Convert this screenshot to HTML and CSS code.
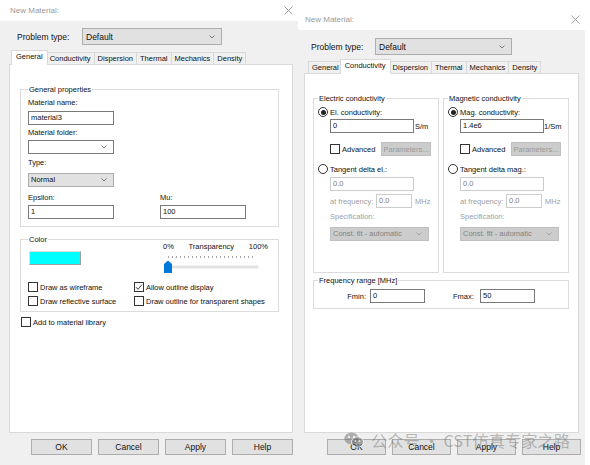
FILE: index.html
```html
<!DOCTYPE html>
<html>
<head>
<meta charset="utf-8">
<link rel="stylesheet" href="styles.css">
</head>
<body>
<div class="screen">
  <div class="dlg dlg-left">
    <div class="titlebar">
      <span class="title">New Material:</span>
      <svg class="close" viewBox="0 0 9 9"><path d="M0.5 0.5 L8.5 8.5 M8.5 0.5 L0.5 8.5" stroke="#8a8a8a" stroke-width="0.8" fill="none"/></svg>
    </div>
    <div class="dbody">
      <div class="ptype">
        <span class="plabel">Problem type:</span>
        <div class="combo gray">
          <span>Default</span>
          <svg class="chev" viewBox="0 0 6 4"><path d="M0.5 0.5 L3 3 L5.5 0.5" stroke="#606060" stroke-width="0.8" fill="none"/></svg>
        </div>
      </div>
      <div class="tabs">
        <span class="tab sel">General</span>
        <span class="tab">Conductivity</span>
        <span class="tab">Dispersion</span>
        <span class="tab">Thermal</span>
        <span class="tab">Mechanics</span>
        <span class="tab">Density</span>
      </div>
      <div class="panel">
        <div class="group gp">
          <span class="legend">General properties</span>
          <div class="lbl l1">Material name:</div>
          <div class="field w86 f1">material3</div>
          <div class="lbl l2">Material folder:</div>
          <div class="combo w86 c1">
            <span></span>
            <svg class="chev" viewBox="0 0 6 4"><path d="M0.5 0.5 L3 3 L5.5 0.5" stroke="#606060" stroke-width="0.8" fill="none"/></svg>
          </div>
          <div class="lbl l3">Type:</div>
          <div class="combo gray w86 c2">
            <span>Normal</span>
            <svg class="chev" viewBox="0 0 6 4"><path d="M0.5 0.5 L3 3 L5.5 0.5" stroke="#606060" stroke-width="0.8" fill="none"/></svg>
          </div>
          <div class="epsmu">
            <div class="lbl">Epsilon:</div>
            <div class="lbl">Mu:</div>
            <div class="field w86">1</div>
            <div class="field w86">100</div>
          </div>
        </div>
        <div class="group color">
          <span class="legend">Color</span>
          <div class="colorrow">
            <div class="swatch"></div>
            <div class="slider">
              <div class="slabels"><span>0%</span><span>Transparency</span><span>100%</span></div>
              <svg class="track" viewBox="0 0 105 21" width="105" height="21">
                <g fill="#a8a8a8">
                  <rect x="5" y="4" width="1" height="2"/><rect x="9" y="4" width="1" height="2"/><rect x="13" y="4" width="1" height="2"/><rect x="17" y="4" width="1" height="2"/><rect x="21" y="4" width="1" height="2"/><rect x="25" y="4" width="1" height="2"/><rect x="29" y="4" width="1" height="2"/><rect x="33" y="4" width="1" height="2"/><rect x="37" y="4" width="1" height="2"/><rect x="41" y="4" width="1" height="2"/><rect x="45" y="4" width="1" height="2"/><rect x="49" y="4" width="1" height="2"/><rect x="53" y="4" width="1" height="2"/><rect x="57" y="4" width="1" height="2"/><rect x="61" y="4" width="1" height="2"/><rect x="65" y="4" width="1" height="2"/><rect x="69" y="4" width="1" height="2"/><rect x="73" y="4" width="1" height="2"/><rect x="77" y="4" width="1" height="2"/><rect x="81" y="4" width="1" height="2"/><rect x="85" y="4" width="1" height="2"/><rect x="89" y="4" width="1" height="2"/>
                </g>
                <rect x="4" y="14" width="91" height="2" fill="#e7e7e7" stroke="#d4d4d4" stroke-width="0.6"/>
                <path d="M1 12 L5 8.5 L9 12 L9 21 L1 21 Z" fill="#0078d7"/>
              </svg>
            </div>
          </div>
          <div class="cbgrid">
            <div class="cbrow"><span class="cb"></span><span>Draw as wireframe</span></div>
            <div class="cbrow"><span class="cb"><svg viewBox="0 0 8 8"><path d="M1 4.2 L3 6.3 L7 1.5" stroke="#222" stroke-width="0.9" fill="none"/></svg></span><span>Allow outline display</span></div>
            <div class="cbrow"><span class="cb"></span><span>Draw reflective surface</span></div>
            <div class="cbrow"><span class="cb"></span><span>Draw outline for transparent shapes</span></div>
          </div>
        </div>
        <div class="cbrow lib"><span class="cb"></span><span>Add to material library</span></div>
      </div>
      <div class="buttons">
        <div class="btn">OK</div>
        <div class="btn">Cancel</div>
        <div class="btn">Apply</div>
        <div class="btn">Help</div>
      </div>
    </div>
  </div>

  <div class="dlg dlg-right">
    <div class="titlebar">
      <span class="title">New Material:</span>
      <svg class="close" viewBox="0 0 9 9"><path d="M0.5 0.5 L8.5 8.5 M8.5 0.5 L0.5 8.5" stroke="#8a8a8a" stroke-width="0.8" fill="none"/></svg>
    </div>
    <div class="dbody">
      <div class="ptype">
        <span class="plabel">Problem type:</span>
        <div class="combo gray">
          <span>Default</span>
          <svg class="chev" viewBox="0 0 6 4"><path d="M0.5 0.5 L3 3 L5.5 0.5" stroke="#606060" stroke-width="0.8" fill="none"/></svg>
        </div>
      </div>
      <div class="tabs">
        <span class="tab">General</span>
        <span class="tab sel">Conductivity</span>
        <span class="tab">Dispersion</span>
        <span class="tab">Thermal</span>
        <span class="tab">Mechanics</span>
        <span class="tab">Density</span>
      </div>
      <div class="panel">
        <div class="grow">
          <div class="group cond">
            <span class="legend">Electric conductivity</span>
            <div class="rrow r1"><span class="rb on"></span><span>El. conductivity:</span></div>
            <div class="inrow i1"><div class="field w84">0</div><span class="unit">S/m</span></div>
            <div class="advrow"><span class="cb"></span><span class="advl">Advanced</span><div class="pbtn">Parameters...</div></div>
            <div class="rrow r2"><span class="rb"></span><span>Tangent delta el.:</span></div>
            <div class="field dis w84 i2">0.0</div>
            <div class="inrow frow"><span class="dlbl flbl">at frequency:</span><div class="field dis w36">0.0</div><span class="unit dlbl">MHz</span></div>
            <div class="dlbl spec">Specification:</div>
            <div class="combo dis w99 sc">
              <span>Const. fit - automatic</span>
              <svg class="chev" viewBox="0 0 6 4"><path d="M0.5 0.5 L3 3 L5.5 0.5" stroke="#9a9a9a" stroke-width="0.8" fill="none"/></svg>
            </div>
          </div>
          <div class="group cond">
            <span class="legend">Magnetic conductivity</span>
            <div class="rrow r1"><span class="rb on"></span><span>Mag. conductivity:</span></div>
            <div class="inrow i1"><div class="field w84">1.4e6</div><span class="unit u0">1/Sm</span></div>
            <div class="advrow"><span class="cb"></span><span class="advl">Advanced</span><div class="pbtn">Parameters...</div></div>
            <div class="rrow r2"><span class="rb"></span><span>Tangent delta mag.:</span></div>
            <div class="field dis w84 i2">0.0</div>
            <div class="inrow frow"><span class="dlbl flbl">at frequency:</span><div class="field dis w36">0.0</div><span class="unit dlbl">MHz</span></div>
            <div class="dlbl spec">Specification:</div>
            <div class="combo dis w99 sc">
              <span>Const. fit - automatic</span>
              <svg class="chev" viewBox="0 0 6 4"><path d="M0.5 0.5 L3 3 L5.5 0.5" stroke="#9a9a9a" stroke-width="0.8" fill="none"/></svg>
            </div>
          </div>
        </div>
        <div class="group freq">
          <span class="legend">Frequency range [MHz]</span>
          <div class="frow2">
            <span class="fl1">Fmin:</span>
            <div class="field w55">0</div>
            <span class="fl2">Fmax:</span>
            <div class="field w55">50</div>
          </div>
        </div>
      </div>
      <div class="buttons">
        <div class="btn">OK</div>
        <div class="btn">Cancel</div>
        <div class="btn">Apply</div>
        <div class="btn">Help</div>
      </div>
    </div>
  </div>

  <div class="watermark">
    <svg class="wxicon" viewBox="0 0 20 16" width="20" height="16">
      <ellipse cx="7.5" cy="6.5" rx="7.2" ry="6" fill="rgba(110,110,110,0.5)"/>
      <ellipse cx="13.5" cy="10" rx="6" ry="5.2" fill="rgba(110,110,110,0.55)" stroke="#fff" stroke-width="0.8"/>
      <circle cx="5" cy="5" r="1" fill="#fff"/>
      <circle cx="10" cy="5" r="1" fill="#fff"/>
      <circle cx="11.5" cy="9" r="0.8" fill="#fff"/>
      <circle cx="15.5" cy="9" r="0.8" fill="#fff"/>
    </svg>
    <span class="wmtext">公众号 · CST仿真专家之路</span>
  </div>
</div>
</body>
</html>
```

FILE: styles.css
```css
* { box-sizing: border-box; }
html, body { margin: 0; padding: 0; }
body {
  width: 590px; height: 465px; overflow: hidden; background: #fff;
  font-family: "Liberation Sans", Arial, sans-serif; font-size: 7.5px; color: #111;
}
.screen { position: relative; display: flex; align-items: flex-start; width: 590px; height: 465px; }
.dlg { display: flex; flex-direction: column; }
.dlg-left { width: 298px; height: 465px; }
.dlg-right { width: 287px; height: 457px; margin-top: 8px; }

.titlebar { display: flex; align-items: center; justify-content: space-between; background: #fff; color: #9a9a9a; font-size: 8px; }
.dlg-left .titlebar { height: 21px; padding: 0 5px 0 10px; }
.dlg-right .titlebar { height: 22px; padding: 0 5px 0 7px; }
.close { width: 9px; height: 9px; }

.dbody { flex: 1; background: #f0f0f0; }
.dlg-left .dbody { padding: 7px 5px 0 9px; }
.dlg-right .dbody { padding: 8px 6px 0 6px; }

.ptype { display: flex; align-items: center; height: 17px; font-size: 8.5px; }
.dlg-left .plabel { margin-left: 8px; width: 65px; }
.dlg-right .plabel { margin-left: 7px; width: 64px; }

.combo {
  display: flex; align-items: center; justify-content: space-between;
  height: 14px; border: 1px solid #7a7a7a; background: #fff; padding: 0 6px 0 2px;
  line-height: 12px;
}
.combo.gray { background: #e1e1e1; border-color: #adadad; }
.combo.dis { background: #cccccc; border-color: #bfbfbf; color: #838383; }
.ptype .combo { height: 17px; padding-left: 3px; }
.dlg-left .ptype .combo { width: 140px; }
.dlg-right .ptype .combo { width: 137px; }
.chev { width: 6px; height: 4px; flex: none; }

.tabs { display: flex; align-items: flex-end; height: 12px; padding-left: 4px; }
.dlg-left .tabs { margin-top: 7px; }
.dlg-right .tabs { margin-top: 6px; }
.tab {
  height: 12px; padding: 0 3px; border: 1px solid #d9d9d9; border-bottom: none;
  margin-right: -1px; line-height: 11px; background: #f0f0f0; white-space: nowrap;
}
.tab.sel {
  height: 15px; background: #fff; margin: 0 -2px -1px -2px; padding: 0 4px;
  position: relative; z-index: 1; line-height: 12px;
}

.panel { background: #fff; border: 1px solid #d9d9d9; }
.dlg-left .panel { height: 369px; padding: 24px 0 0 10px; }
.dlg-right .panel { height: 360px; padding: 24px 0 0 8px; }

.group { border: 1px solid #dcdcdc; background: #fff; }
.legend {
  display: block; width: max-content; height: 11px; line-height: 11px;
  margin-top: -6px; padding: 0 1px; background: #fff;
}
.lbl { line-height: 12px; height: 12px; }
.field {
  height: 14px; border: 1px solid #7a7a7a; background: #fff; padding: 0 2px;
  line-height: 12px; white-space: nowrap;
}
.field.dis { border-color: #cccccc; color: #7d7d7d; }
.w86 { width: 86px; }
.w84 { width: 84px; }
.w36 { width: 36px; }
.w55 { width: 55px; }
.w99 { width: 99px; }

.gp { width: 259px; padding: 0 7px 7px 7px; }
.l1 { margin-top: 2px; }
.f1 { margin-top: 2px; }
.l2 { margin-top: 2px; }
.c1 { margin-top: 1px; }
.l3 { margin-top: 3px; }
.c2 { margin-top: 4px; }
.epsmu { display: grid; grid-template-columns: 132px 86px; row-gap: 1px; margin-top: 5px; }

.color { width: 259px; margin-top: 12px; padding: 0 7px 3px 7px; }
.colorrow { display: flex; align-items: flex-start; }
.swatch {
  width: 52px; height: 14px; margin: 6px 0 0 1px; background: #00ffff;
  border: 1px solid #a0a0a0; border-top-color: #e0e0e0; border-left-color: #e0e0e0;
}
.slider { width: 105px; margin: -3px 0 0 82px; }
.slabels { display: flex; justify-content: space-between; line-height: 10px; height: 10px; }
.track { display: block; }
.cbgrid { display: grid; grid-template-columns: 106px auto; grid-auto-rows: 14px; margin-top: 7px; }
.cbrow { display: flex; align-items: center; gap: 2px; height: 14px; white-space: nowrap; }
.cb {
  width: 10px; height: 10px; border: 1px solid #333; background: #fff; flex: none;
  display: flex; align-items: center; justify-content: center;
}
.cb svg { width: 8px; height: 8px; }
.lib { margin-top: 3px; padding-left: 1px; }

.buttons { display: flex; justify-content: flex-end; gap: 6px; margin-top: 6px; }
.btn {
  height: 16px; border: 1px solid #adadad; background: #e1e1e1;
  display: flex; align-items: center; justify-content: center; font-size: 8.5px;
}
.dlg-left .btn { width: 61px; }
.dlg-right .btn { width: 59px; }
.dlg-right .buttons { margin-right: -2px; }

/* right dialog */
.grow { display: flex; gap: 4px; }
.cond { width: 126px; height: 175px; padding: 0 4px; }
.rrow { display: flex; align-items: center; gap: 2px; height: 12px; white-space: nowrap; }
.rb {
  width: 10px; height: 10px; border: 1px solid #333; border-radius: 50%; background: #fff; flex: none;
  display: flex; align-items: center; justify-content: center;
}
.rb.on::after { content: ""; width: 5px; height: 5px; border-radius: 50%; background: #222; }
.r1 { margin-top: 2px; }
.inrow { display: flex; align-items: center; padding-left: 12px; white-space: nowrap; }
.i1 { margin-top: 1px; }
.unit { margin-left: 1px; }
.u0 { margin-left: 0; }
.advrow { display: flex; align-items: center; height: 14px; margin-top: 9px; padding-left: 12px; }
.advl { margin-left: 2px; width: 39px; }
.pbtn {
  width: 50px; height: 14px; background: #cccccc; border: 1px solid #bfbfbf; color: #9a9a9a;
  display: flex; align-items: center; justify-content: center;
}
.r2 { margin-top: 7px; }
.i2 { margin-top: 2px; margin-left: 12px; }
.frow { margin-top: 3px; }
.flbl { width: 46px; }
.frow .unit { margin-left: 3px; }
.dlbl { color: #a0a0a0; }
.spec { margin-top: 3px; margin-left: 12px; line-height: 12px; height: 12px; }
.sc { margin-top: 4px; margin-left: 12px; }

.freq { width: 256px; height: 29px; margin-top: 7px; padding: 0 4px; }
.frow2 { display: flex; align-items: center; margin-top: 3px; }
.fl1 { width: 48px; text-align: right; }
.frow2 .field { margin-left: 4px; }
.fl2 { width: 27px; margin-left: 28px; }
.fl2 + .field { margin-left: 0; }

.watermark {
  position: absolute; left: 344px; top: 430px; display: flex; align-items: center; gap: 7px;
  pointer-events: none;
}
.wxicon { display: block; }
.wmtext {
  font-family: "Noto Sans CJK SC", "Noto Sans", sans-serif; font-size: 16.3px; line-height: 20px;
  color: rgba(110, 110, 110, 0.45); white-space: nowrap;
}
```
